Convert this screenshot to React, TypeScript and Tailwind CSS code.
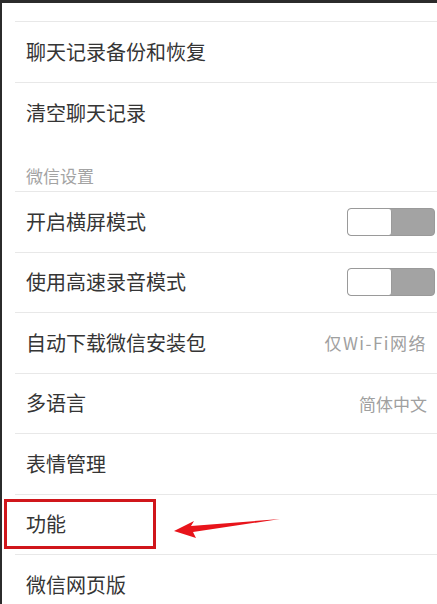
import React from "react";

const font = { fontFamily: '"Noto Sans CJK SC", "Noto Sans", sans-serif' };

function Toggle() {
  return (
    <div className="flex h-[28px] w-[88px] overflow-hidden rounded-[4px] border border-[#9a9a9a] bg-[#a3a3a3]">
      <div className="h-full w-[44px] rounded-[3px] border-r border-[#9a9a9a] bg-white" />
    </div>
  );
}

function Row({
  label,
  right,
  toggle,
  last,
  wide,
}: {
  label: string;
  right?: string;
  toggle?: boolean;
  last?: boolean;
  wide?: boolean;
}) {
  return (
    <div
      className={`ml-[13px] flex h-[60.5px] items-center justify-between pl-[11px] ${
        toggle ? "pr-[2px]" : "pr-[10px]"
      } ${last ? "" : "border-b border-[#e8e8e8]"}`}
    >
      <span className="text-[20px] text-[#353535]">{label}</span>
      {right && (
        <span
          className={`text-[17px] text-[#a0a0a0] ${wide ? "tracking-[1.5px]" : ""}`}
        >
          {right}
        </span>
      )}
      {toggle && <Toggle />}
    </div>
  );
}

export default function App() {
  return (
    <div
      className="relative h-[604px] w-[437px] overflow-hidden border-l-2 border-[#2b2b2b] bg-white"
      style={font}
    >
      <div className="h-[3px] bg-[#2b2b2b]" />
      <div className="ml-[13px] h-[19px] border-b border-[#e8e8e8]" />

      <Row label="聊天记录备份和恢复" />
      <Row label="清空聊天记录" last />

      {/* section header */}
      <div className="ml-[13px] flex h-[49px] items-end border-b border-[#e8e8e8] pb-[3px] pl-[11px]">
        <span className="text-[17px] text-[#a3a3a3]">微信设置</span>
      </div>

      <Row label="开启横屏模式" toggle />
      <Row label="使用高速录音模式" toggle />
      <Row label="自动下载微信安装包" right="仅Wi-Fi网络" wide />
      <Row label="多语言" right="简体中文" />
      <Row label="表情管理" />
      <Row label="功能" />
      <Row label="微信网页版" last />

      {/* annotation */}
      <div className="absolute left-[2px] top-[499px] h-[50px] w-[152px] border-[3px] border-[#d0161b]" />
      <svg
        className="absolute left-[170px] top-[515px]"
        width="112"
        height="26"
        viewBox="0 0 112 26"
      >
        <path
          d="M2 16 L22 6 L19 11 L108 4 L21 17 L24 23 Z"
          fill="#e8141b"
        />
      </svg>
    </div>
  );
}
